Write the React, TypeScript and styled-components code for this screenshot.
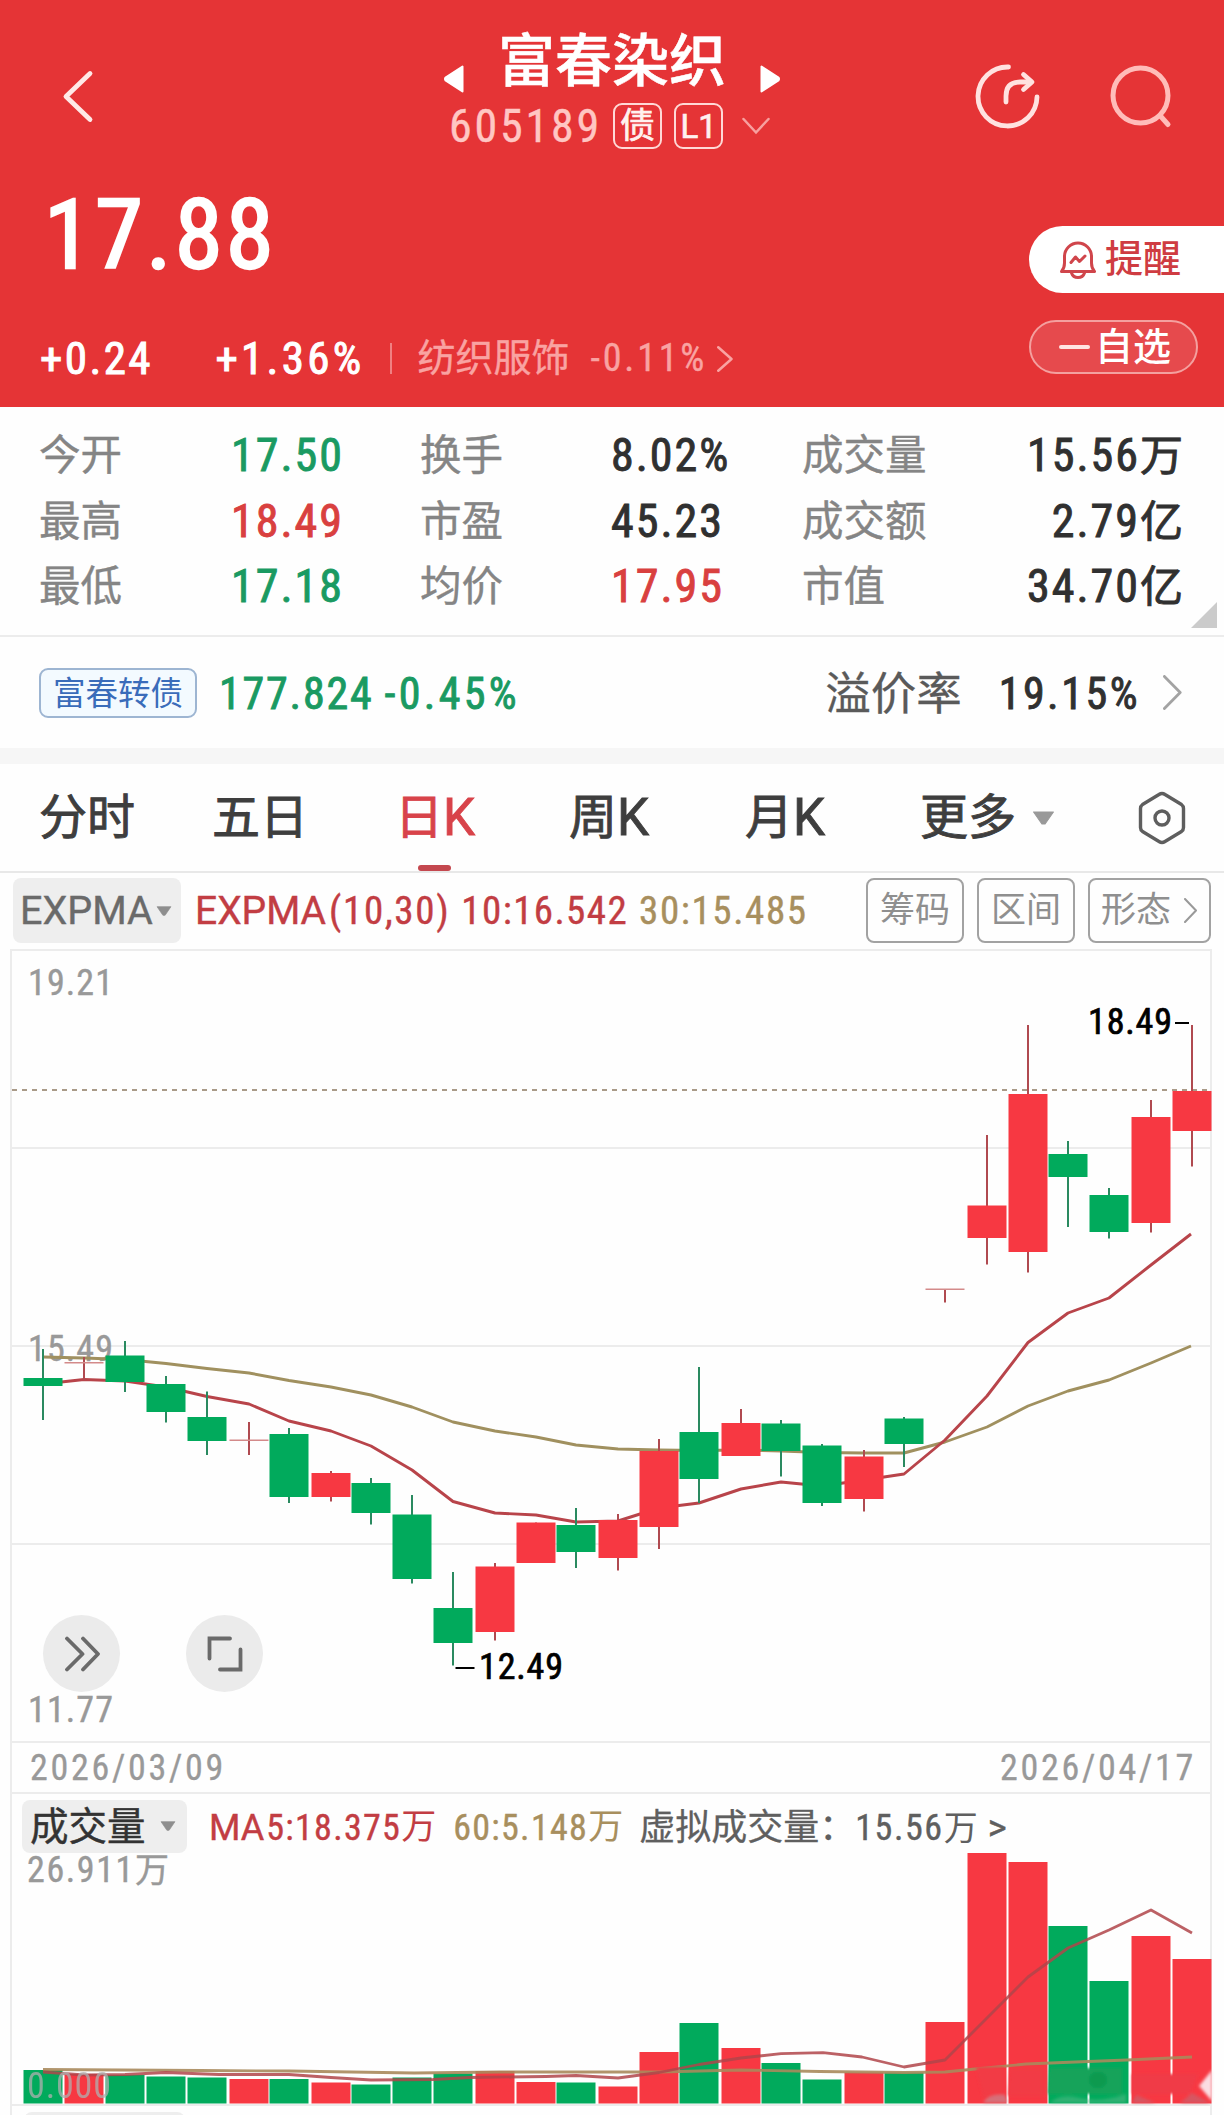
import React from "react";
import styled, { createGlobalStyle, css } from "styled-components";

const RED = "#e53436";
const UP = "#f73842";
const DOWN = "#01aa5c";
const LINE = "#ececec";
const NUM = '"Roboto Condensed", Roboto, "Noto Sans CJK SC", sans-serif';

const Global = createGlobalStyle`
  * { box-sizing: border-box; }
  body { margin: 0; background: #fefefe; }
  button { font: inherit; border: 0; padding: 0; background: none; color: inherit; letter-spacing: inherit; }
`;

const Page = styled.div`
  width: 1224px;
  height: 2115px;
  overflow: hidden;
  background: #fefefe;
  font-family: Roboto, "Noto Sans CJK SC", sans-serif;
  color: #333;
`;

const Txt = styled.span<{
  $size: number;
  $color?: string;
  $weight?: number;
  $ls?: number;
  $ml?: number;
  $bold?: number;
  $drop?: number;
}>`
  font-size: ${(p) => p.$size}px;
  color: ${(p) => p.$color ?? "inherit"};
  font-weight: ${(p) => p.$weight ?? 400};
  letter-spacing: ${(p) => p.$ls ?? 0}px;
  margin-left: ${(p) => p.$ml ?? 0}px;
  padding-top: ${(p) => p.$drop ?? 0}px;
  -webkit-text-stroke: ${(p) => p.$bold ?? 0}px currentColor;
  white-space: pre;
`;

const Num = styled(Txt)`
  font-family: ${NUM};
`;

/* ---------- red header ---------- */

const Header = styled.header`
  height: 407px;
  background: ${RED};
  color: #fff;
`;

const TopBar = styled.div`
  display: grid;
  grid-template-columns: 1fr 340px 1fr;
  height: 160px;
`;

const BackCell = styled.div`
  padding: 69px 0 0 61px;
`;

const TitleCell = styled.div`
  padding-top: 29px;
`;

const NameRow = styled.div`
  display: flex;
  justify-content: space-between;
  align-items: flex-end;
  height: 66px;
  padding: 0 2px;
  line-height: 66px;
  svg { margin-bottom: 2px; display: block; }
`;

const CodeRow = styled.div`
  display: flex;
  align-items: center;
  height: 46px;
  margin-top: 8px;
  padding-left: 7px;
  line-height: 46px;
`;

const Tag = styled.span<{ $ml: number; $fs: number }>`
  width: 49px;
  height: 46px;
  margin-left: ${(p) => p.$ml}px;
  border: 2px solid #ffd9d6;
  border-radius: 9px;
  font-size: ${(p) => p.$fs}px;
  -webkit-text-stroke: 0.7px currentColor;
  line-height: 43px;
  text-align: center;
  color: #fff1ef;
`;

const ActionCell = styled.div`
  display: flex;
  justify-content: flex-end;
  gap: 66px;
  padding: 62px 51px 0 0;
`;

const PriceRow = styled.div`
  display: flex;
  justify-content: space-between;
  height: 149px;
  padding-left: 44px;
  line-height: 151px;
`;

const AlertPill = styled.button`
  display: flex;
  align-items: center;
  width: 195px;
  height: 67px;
  margin-top: 66px;
  padding-left: 30px;
  gap: 8px;
  border-radius: 34px 0 0 34px;
  background: #fff;
  color: #cf3c42;
  line-height: 67px;
`;

const ChangeRow = styled.div`
  display: flex;
  align-items: flex-start;
  height: 98px;
  padding: 11px 26px 0 40px;
  line-height: 77px;
`;

const Divider = styled.i`
  width: 2px;
  height: 31px;
  margin: 23px 26px 0 25px;
  background: #f08082;
`;

const Sector = styled.div`
  display: flex;
  align-items: center;
  color: #f9a3a2;
`;

const WatchPill = styled.button`
  display: flex;
  align-items: center;
  width: 169px;
  height: 54px;
  margin-left: auto;
  padding-left: 28px;
  gap: 5px;
  border: 2px solid #f4a09f;
  border-radius: 27px;
  background: #e64a4d;
  line-height: 49px;
`;

const Minus = styled.i`
  width: 31px;
  height: 4px;
  border-radius: 2px;
  background: #ffe4e2;
`;

/* ---------- quote table ---------- */

const Stats = styled.section`
  position: relative;
  display: grid;
  grid-template-columns: 192px 189px 191px 191px 1fr auto;
  grid-auto-rows: 65.5px;
  height: 230px;
  padding: 16px 41px 0 39px;
  border-bottom: 2px solid ${LINE};
  line-height: 65.5px;
`;

const StatLabel = styled.span`
  font-size: 41.5px;
  color: #858585;
  -webkit-text-stroke: 0.4px currentColor;
`;

const StatValue = styled.span<{ $tone: string }>`
  font-family: ${NUM};
  font-size: 46px;
  letter-spacing: 2px;
  -webkit-text-stroke: 0.9px currentColor;
  color: ${(p) => p.$tone};
  white-space: nowrap;
`;

const Right = styled(StatValue)`
  grid-column: 6;
  text-align: right;
`;

const Unit = styled.span`
  font-size: 43px;
  letter-spacing: 0;
`;

const Corner = styled.i`
  position: absolute;
  right: 7px;
  bottom: 7px;
  width: 26px;
  height: 26px;
  background: #cbcbcb;
  clip-path: polygon(100% 0, 100% 100%, 0 100%);
`;

const BondRow = styled.section`
  display: flex;
  align-items: center;
  height: 111px;
  padding: 0 41px 0 39px;
  line-height: 107px;
`;

const BondTag = styled.span`
  width: 158px;
  height: 50px;
  border: 2px solid #9db5d2;
  border-radius: 9px;
  background: #f3faff;
  color: #3a6cba;
  font-size: 32.5px;
  line-height: 49px;
  text-align: center;
`;

const Spacer = styled.i`
  flex: 1;
`;

const Band = styled.div`
  height: 16px;
  background: #f6f6f6;
`;

/* ---------- tabs ---------- */

const Tabs = styled.nav`
  display: grid;
  grid-template-columns: 173px 183px 174px 176px 175px 217px 50px;
  height: 109px;
  padding-left: 39px;
  border-bottom: 2px solid #e8e8e8;
  line-height: 107px;
  color: #3e3e3e;
`;

const Tab = styled.button<{ $active?: boolean }>`
  position: relative;
  display: flex;
  align-items: center;
  height: 107px;
  font-size: 48px;
  -webkit-text-stroke: 0.9px currentColor;
  color: ${(p) => (p.$active ? "#d8434a" : "inherit")};
  ${(p) =>
    p.$active &&
    css`
      &::after {
        content: "";
        position: absolute;
        left: 23px;
        bottom: 0;
        width: 33px;
        height: 6px;
        border-radius: 3px;
        background: #c4484f;
      }
    `}
`;

const K = styled.span`
  font-size: 51px;
`;

/* ---------- charts ---------- */

const IndicatorRow = styled.div`
  display: flex;
  align-items: center;
  height: 76px;
  padding: 0 13px 1px;
  line-height: 65px;
`;

const Picker = styled.button<{ $w: number; $h: number; $pl: number }>`
  display: flex;
  align-items: center;
  width: ${(p) => p.$w}px;
  height: ${(p) => p.$h}px;
  line-height: ${(p) => p.$h}px;
  padding-left: ${(p) => p.$pl}px;
  border-radius: 8px;
  background: #eeeeee;
`;

const ChipGroup = styled.div`
  display: flex;
  gap: 13px;
  margin-left: auto;
`;

const Chip = styled.button<{ $w: number }>`
  display: flex;
  align-items: center;
  justify-content: center;
  gap: 13px;
  width: ${(p) => p.$w}px;
  height: 65px;
  border: 2px solid #a2a2a2;
  border-radius: 8px;
  font-size: 35px;
  line-height: 62px;
  color: #8f8f8f;
`;

const Frame = styled.div`
  margin: 0 12px 0 10px;
  border: solid ${LINE};
  border-width: 2px 2px 0;
`;

const Plot = styled.div<{ $h: number }>`
  position: relative;
  height: ${(p) => p.$h}px;
  svg.plot { display: block; overflow: visible; }
  text { font-family: ${NUM}; }
`;

const Round = styled.button<{ $x: number }>`
  position: absolute;
  left: ${(p) => p.$x}px;
  bottom: 49px;
  display: grid;
  place-items: center;
  width: 77px;
  height: 77px;
  border-radius: 50%;
  background: #ebebeb;
`;

const DateRow = styled.div`
  display: flex;
  justify-content: space-between;
  height: 51px;
  padding: 0 14px 0 18px;
  border-top: 2px solid ${LINE};
  line-height: 51px;
`;

const VolumeHead = styled.div`
  display: flex;
  align-items: center;
  height: 61px;
  padding: 5px 10px 0;
  border-top: 2px solid ${LINE};
  line-height: 50px;
`;

const NextPanel = styled.div`
  height: 11px;
  border-top: 2px solid ${LINE};
  padding: 6px 12px 0;
`;

const NextPicker = styled.div`
  width: 161px;
  height: 20px;
  border-radius: 8px;
  background: #eeeeee;
`;

/* x, high, low, body top, body bottom, rising, top of the volume bar */
type Bar = [number, number, number, number, number, boolean, number];

const bars: Bar[] = [
  [43, 1349, 1420, 1378, 1386, false, 2070],
  [84, 1357, 1380, 1362, 1363.5, true, 2074],
  [125, 1341, 1392, 1355.5, 1382, false, 2075],
  [166, 1376, 1422.5, 1384, 1412, false, 2076.5],
  [207, 1391.5, 1455, 1417, 1441, false, 2077.5],
  [249, 1422, 1455, 1439.5, 1441, true, 2079],
  [289, 1428, 1503, 1434, 1497, false, 2079],
  [331, 1471, 1501.5, 1473, 1497, true, 2082.5],
  [371, 1478, 1524.5, 1483, 1513, false, 2084.5],
  [412, 1495, 1583.5, 1514.5, 1579, false, 2077.5],
  [453, 1572, 1665.5, 1608, 1643, false, 2073.5],
  [495, 1563, 1640.5, 1566.5, 1632, true, 2071],
  [536, 1522.5, 1563, 1522.5, 1563, true, 2082],
  [576, 1508, 1568, 1525, 1552, false, 2082.5],
  [618, 1514, 1570.5, 1520, 1558, true, 2086.5],
  [659, 1439, 1549, 1451, 1527, true, 2052],
  [699, 1367, 1503, 1432, 1479, false, 2023],
  [741, 1409, 1456, 1423, 1456, true, 2048],
  [781, 1420, 1476.5, 1423.5, 1451, false, 2063],
  [822, 1444, 1506, 1445.5, 1503, false, 2079.5],
  [864, 1450, 1511.5, 1456.5, 1499, true, 2072.5],
  [904, 1417, 1467, 1418.5, 1444, false, 2072.5],
  [945, 1289, 1302.5, 1288.5, 1290, true, 2022],
  [987, 1135, 1264.5, 1205.5, 1238, true, 1853],
  [1028, 1025, 1272.5, 1094, 1252, true, 1862],
  [1068, 1141, 1227, 1154, 1177, false, 1926],
  [1109, 1188, 1238.5, 1195, 1232, false, 1981],
  [1151, 1100, 1232.5, 1117, 1223, true, 1936],
  [1192, 1025, 1166.5, 1091, 1131, true, 1959],
];

const fast =
  "43,1384 84,1379.5 125,1381 166,1387 207,1396.5 249,1404 289,1421 331,1431 371,1446 412,1470 453,1501.5 495,1513 536,1515 576,1522 618,1521 659,1508 699,1503 741,1489 781,1482 822,1486 864,1480 904,1474 945,1440 987,1396 1028,1342.5 1068,1313 1109,1298 1151,1265 1191,1234";
const slow =
  "43,1357 84,1358 125,1359.5 166,1363.5 207,1368.5 249,1373 289,1380.5 331,1387 371,1395 412,1407 453,1422 495,1431 536,1437 576,1445 618,1449 659,1450 699,1450.5 741,1450 781,1451 822,1452.5 864,1453 904,1453 945,1442 987,1427 1028,1406 1068,1391 1109,1380 1151,1363 1191,1346";
const volFast =
  "43,2072 84,2075 125,2074.5 166,2072.5 219,2074.5 289,2074.5 331,2077.5 371,2080 433,2079.5 470,2077.5 546,2076.5 576,2075.5 618,2078 659,2072.5 699,2064.5 741,2058 781,2053.7 823,2052.7 862,2057 904,2067 945,2060 987,2018 1028,1977 1068,1948 1109,1930 1151,1910 1192,1933";
const volSlow =
  "43,2069.5 200,2070.5 289,2071 414,2073 500,2072 612,2072 659,2072 741,2070 820,2071.5 904,2072.5 945,2072 975,2069 1026,2064 1088,2061.5 1127,2060 1192,2057";

const axis = { fontSize: 36, fill: "#999", stroke: "#999", strokeWidth: 0.4 };

const CaretDown = ({ w, h, ml, color = "#8e8e8e" }: { w: number; h: number; ml: number; color?: string }) => (
  <svg width={w} height={h} viewBox="0 0 22 14" preserveAspectRatio="none" style={{ marginLeft: ml }}>
    <path d="M1.5 1h19L12.5 13h-3z" fill={color} stroke={color} strokeLinejoin="round" />
  </svg>
);

const Chevron = ({ w, h, color, sw, ml = 0 }: { w: number; h: number; color: string; sw: number; ml?: number }) => (
  <svg width={w} height={h} viewBox={`0 0 ${w} ${h}`} fill="none" stroke={color} strokeWidth={sw} style={{ marginLeft: ml }}>
    <path d={`M${sw / 2} ${sw / 2}L${w - sw} ${h / 2}L${sw / 2} ${h - sw / 2}`} strokeLinejoin="round" strokeLinecap="round" />
  </svg>
);

function QuoteHeader() {
  return (
    <Header>
      <TopBar>
        <BackCell>
          <svg width="34" height="54" viewBox="0 0 34 54" fill="none" stroke="#ffe9e7" strokeWidth="4.8" strokeLinecap="round" strokeLinejoin="round">
            <path d="M29 4.5L5 27.5L29 50.5" />
          </svg>
        </BackCell>
        <TitleCell>
          <NameRow>
            <svg width="20" height="28" viewBox="0 0 20 28">
              <path d="M18.5 1.5v25L1.5 15.5q-1-1.5 0-3z" fill="#fff" stroke="#fff" strokeWidth="2" strokeLinejoin="round" />
            </svg>
            <Txt $size={57} $weight={500} $bold={0.5}>富春染织</Txt>
            <svg width="20" height="28" viewBox="0 0 20 28">
              <path d="M1.5 1.5v25L18.5 15.5q1-1.5 0-3z" fill="#fff" stroke="#fff" strokeWidth="2" strokeLinejoin="round" />
            </svg>
          </NameRow>
          <CodeRow>
            <Num $size={46} $color="#ffc6c3" $ls={2.8} $bold={0.4}>605189</Num>
            <Tag $ml={11} $fs={35}>债</Tag>
            <Tag $ml={12} $fs={33}>L1</Tag>
            <svg width="28" height="18" viewBox="0 0 28 18" fill="none" stroke="#f7a09f" strokeWidth="2.5" style={{ marginLeft: 19 }}>
              <path d="M1.5 2L14 15.5L26.5 2" strokeLinecap="round" />
            </svg>
          </CodeRow>
        </TitleCell>
        <ActionCell>
          <svg width="68" height="68" viewBox="0 0 68 68" fill="none" stroke="#ffe2e0" strokeWidth="4.8" strokeLinecap="round" strokeLinejoin="round">
            <path d="M35.5 5A29.5 29.5 0 1 0 64 35" />
            <path d="M33 40V34Q33 20 47 20H58" />
            <path d="M50.5 12.5L59 20L50.5 27.5" />
          </svg>
          <svg width="66" height="68" viewBox="0 0 66 68" fill="none" stroke="#ffbcb9" strokeWidth="5" strokeLinecap="round">
            <circle cx="33.5" cy="33.5" r="27.5" />
            <path d="M53 53.5L61 62.5" />
          </svg>
        </ActionCell>
      </TopBar>
      <PriceRow>
        <Num $size={97} $ls={3.1} $bold={2.4}>17.88</Num>
        <AlertPill>
          <svg width="38" height="40" viewBox="0 0 38 40" fill="none" stroke="#d0454b" strokeWidth="3" strokeLinejoin="round" strokeLinecap="round">
            <path d="M2.5 31.5Q5.5 28 5.5 23V16.5a13.5 13.5 0 0 1 27 0V23Q32.5 28 35.5 31.5Z" />
            <path d="M12.5 33Q14 37.5 19 37.5T25.5 33" />
            <path d="M12 22.5L16.5 17L20.5 21.5L26 16" />
          </svg>
          <Txt $size={38} $weight={500}>提醒</Txt>
        </AlertPill>
      </PriceRow>
      <ChangeRow>
        <Num $size={45} $ls={2.4} $bold={1}>+0.24</Num>
        <Num $size={45} $ls={3.3} $bold={1} $ml={62.5}>+1.36%</Num>
        <Divider />
        <Sector>
          <Txt $size={38} $bold={0.4}>纺织服饰</Txt>
          <Num $size={38} $ml={21} $ls={2.8} $bold={0.4}>-0.11%</Num>
          <Chevron w={17} h={26} sw={2.5} color="#f9a3a2" ml={10} />
        </Sector>
        <WatchPill>
          <Minus />
          <Txt $size={38} $weight={500}>自选</Txt>
        </WatchPill>
      </ChangeRow>
    </Header>
  );
}

const INK = "#303030";
const G = "#1a9a62";
const R = "#d9403f";

const statRows = [
  { a: "今开", av: "17.50", at: G, b: "换手", bv: "8.02%", bt: INK, c: "成交量", cv: "15.56", u: "万" },
  { a: "最高", av: "18.49", at: R, b: "市盈", bv: "45.23", bt: INK, c: "成交额", cv: "2.79", u: "亿" },
  { a: "最低", av: "17.18", at: G, b: "均价", bv: "17.95", bt: R, c: "市值", cv: "34.70", u: "亿" },
];

function PriceChart() {
  return (
    <Plot $h={790}>
      <svg className="plot" width="1198" height="790" viewBox="12 951 1198 790">
        {[1148, 1346, 1544].map((y) => (
          <path key={y} d={`M12 ${y}H1210`} stroke={LINE} strokeWidth="2" />
        ))}
        <text x="28" y="995" textLength="85" {...axis}>19.21</text>
        <text x="28" y="1361" textLength="85" {...axis}>15.49</text>
        <text x="28" y="1722" textLength="85" {...axis}>11.77</text>
        <path d="M12 1090H1210" stroke="#a99a88" strokeWidth="1.8" strokeDasharray="5 5" />
        <g fill="none" strokeWidth="2.9" strokeLinejoin="round">
          <polyline points={slow} stroke="#a0905f" />
          <polyline points={fast} stroke="#b8444a" />
        </g>
        {bars.map(([x, hi, lo, top, bottom, up]) => (
          <g key={x} fill={up ? UP : DOWN}>
            <rect x={x - 1} y={hi} width="2" height={lo - hi} fill={up ? "#b04a50" : "#2a8a60"} />
            <rect x={x - 19.5} y={top} width="39" height={bottom - top} fill={bottom - top < 3 ? "#d38a8a" : undefined} />
          </g>
        ))}
        <path d="M1175 1023H1189M455.5 1668H474.5" stroke="#000" strokeWidth="2.2" />
        <g fontSize="36" fill="#000" stroke="#000" strokeWidth="0.7">
          <text x="1088" y="1034" textLength="84">18.49</text>
          <text x="479" y="1679" textLength="84">12.49</text>
        </g>
      </svg>
      <Round $x={31}>
        <svg width="36" height="36" viewBox="0 0 36 36" fill="none" stroke="#6a6a6a" strokeWidth="3.8" strokeLinecap="round" strokeLinejoin="round">
          <path d="M3 2.5L18.5 18L3 33.5M19 2.5L34 18L19 33.5" />
        </svg>
      </Round>
      <Round $x={174}>
        <svg width="36" height="36" viewBox="0 0 36 36" fill="none" stroke="#6a6a6a" strokeWidth="3.8" strokeLinecap="round">
          <path d="M23 2.5H2.5V22.5M33.5 13.5V33.5H13" />
        </svg>
      </Round>
    </Plot>
  );
}

function VolumeChart() {
  return (
    <Plot $h={251}>
      <svg className="plot" width="1198" height="251" viewBox="12 1853 1198 251">
        <defs>
          <filter id="soft" x="-20%" y="-40%" width="140%" height="180%">
            <feGaussianBlur stdDeviation="1.6" />
          </filter>
        </defs>
        <text x="27" y="1882" textLength="142" {...axis}>
          26.911<tspan fontSize="34">万</tspan>
        </text>
        {bars.map(([x, , , , , up, top]) => (
          <rect key={x} x={x - 19.5} y={top} width="39" height={2103.5 - top} fill={up ? UP : DOWN} />
        ))}
        <g fill="none" strokeWidth="2.8" strokeLinejoin="round">
          <polyline points={volSlow} stroke="#a98a5c" opacity="0.9" />
          <polyline points={volFast} stroke="#b0454a" opacity="0.85" />
        </g>
        <g filter="url(#soft)">
          <path d="M976 2067h28v33h-20zM1010 2068h34v28h-36z" fill="#f23a45" />
          <path d="M983 2103q6-10 22-8l3 8z" fill="#c98790" opacity="0.7" />
          <path d="M1050 2068h72v26h-74z" fill="#12a35a" />
          <path d="M1050 2103q10-10 30-5t46-4v9z" fill="#5cb98a" opacity="0.5" />
          <ellipse cx="1098" cy="2080" rx="9" ry="8" fill="#089a50" />
          <path d="M1132 2074h66l-8 20h-58z" fill="#f03a46" />
          <path d="M1180 2103l12-10 18 10zM1132 2103l4-8 20 8z" fill="#c9626d" opacity="0.7" />
          <path d="M1212 2070l-13 16 13 15z" fill="#fbdde2" />
        </g>
        <text x="27" y="2098" textLength="84" fontSize="36" fill="#b0b0b0" opacity="0.75">0.000</text>
      </svg>
    </Plot>
  );
}

export default function App() {
  return (
    <Page>
      <Global />
      <QuoteHeader />
      <Stats>
        {statRows.map((r) => (
          <React.Fragment key={r.a}>
            <StatLabel>{r.a}</StatLabel>
            <StatValue $tone={r.at}>{r.av}</StatValue>
            <StatLabel>{r.b}</StatLabel>
            <StatValue $tone={r.bt}>{r.bv}</StatValue>
            <StatLabel>{r.c}</StatLabel>
            <Right $tone={INK}>
              {r.cv}
              <Unit>{r.u}</Unit>
            </Right>
          </React.Fragment>
        ))}
        <Corner />
      </Stats>
      <BondRow>
        <BondTag>富春转债</BondTag>
        <Num $size={44} $bold={0.9} $color={G} $ls={1.8} $ml={22} $drop={3}>177.824</Num>
        <Num $size={44} $bold={0.9} $color={G} $ls={3.3} $ml={11} $drop={3}>-0.45%</Num>
        <Spacer />
        <Txt $size={45.5} $bold={0.3} $color="#5a5a5a" $drop={3}>溢价率</Txt>
        <Num $size={44} $bold={0.9} $color={INK} $ls={2.5} $ml={37} $drop={3}>19.15%</Num>
        <Chevron w={20} h={35} sw={2.8} color="#a3a3a3" ml={23} />
      </BondRow>
      <Band />
      <Tabs>
        <Tab>分时</Tab>
        <Tab>五日</Tab>
        <Tab $active>日<K>K</K></Tab>
        <Tab>周<K>K</K></Tab>
        <Tab>月<K>K</K></Tab>
        <Tab>
          更多
          <CaretDown w={23} h={14} ml={16} color="#999" />
        </Tab>
        <Tab>
          <svg width="50" height="54" viewBox="0 0 50 54" fill="none" stroke="#5e5e5e" strokeWidth="3.4" strokeLinejoin="round">
            <path d="M22 3.5Q25 1.5 28 3.5L44.5 13.5Q46.5 15 46.5 17.5V36.5Q46.5 39 44.5 40.5L28 50.5Q25 52.5 22 50.5L5.5 40.5Q3.5 39 3.5 36.5V17.5Q3.5 15 5.5 13.5Z" />
            <circle cx="25" cy="27" r="7" />
          </svg>
        </Tab>
      </Tabs>
      <IndicatorRow>
        <Picker $w={168} $h={65} $pl={7}>
          <Txt $size={39.5} $color="#6a6a6a" $bold={0.4}>EXPMA</Txt>
          <CaretDown w={16} h={10} ml={3} />
        </Picker>
        <Txt $size={39} $bold={0.4} $color="#c23d43" $ml={14} $drop={2}>EXPMA</Txt>
        <Num $size={39} $bold={0.4} $color="#c23d43" $ml={3} $ls={1.7} $drop={2}>(10,30)</Num>
        <Num $size={39} $bold={0.4} $color="#c23d43" $ml={11} $ls={1.4} $drop={2}>10:16.542</Num>
        <Num $size={39} $bold={0.4} $color="#a88f5e" $ml={11} $ls={1.6} $drop={2}>30:15.485</Num>
        <ChipGroup>
          <Chip $w={98}>筹码</Chip>
          <Chip $w={98}>区间</Chip>
          <Chip $w={123}>
            形态
            <Chevron w={14} h={25} sw={2} color="#999" />
          </Chip>
        </ChipGroup>
      </IndicatorRow>
      <Frame>
        <PriceChart />
        <DateRow>
          <Num $size={36} $bold={0.3} $color="#999" $ls={2.7}>2026/03/09</Num>
          <Num $size={36} $bold={0.3} $color="#999" $ls={2.7}>2026/04/17</Num>
        </DateRow>
        <VolumeHead>
          <Picker $w={165} $h={53} $pl={8}>
            <Txt $size={38.5} $color="#333" $bold={0.4}>成交量</Txt>
            <CaretDown w={16} h={10} ml={14} />
          </Picker>
          <Txt $size={36} $bold={0.4} $color="#c23d43" $ml={22} $drop={4}>MA</Txt>
          <Num $size={36} $bold={0.4} $color="#c23d43" $ml={2} $ls={1.3} $drop={4}>5:18.375</Num>
          <Txt $size={35} $color="#c23d43" $drop={4}>万</Txt>
          <Num $size={36} $bold={0.4} $color="#a88f5e" $ml={17} $ls={1.3} $drop={4}>60:5.148</Num>
          <Txt $size={35} $color="#a88f5e" $drop={4}>万</Txt>
          <Txt $size={36} $bold={0.3} $color="#5f5f5f" $ml={16} $drop={4}>虚拟成交量：</Txt>
          <Num $size={36} $bold={0.4} $color="#5f5f5f" $ls={1.6} $drop={4}>15.56</Num>
          <Txt $size={34} $color="#5f5f5f" $drop={4}>万</Txt>
          <Txt $size={36} $bold={0.4} $color="#5f5f5f" $ml={10} $drop={4}>&gt;</Txt>
        </VolumeHead>
        <VolumeChart />
        <NextPanel>
          <NextPicker />
        </NextPanel>
      </Frame>
    </Page>
  );
}
